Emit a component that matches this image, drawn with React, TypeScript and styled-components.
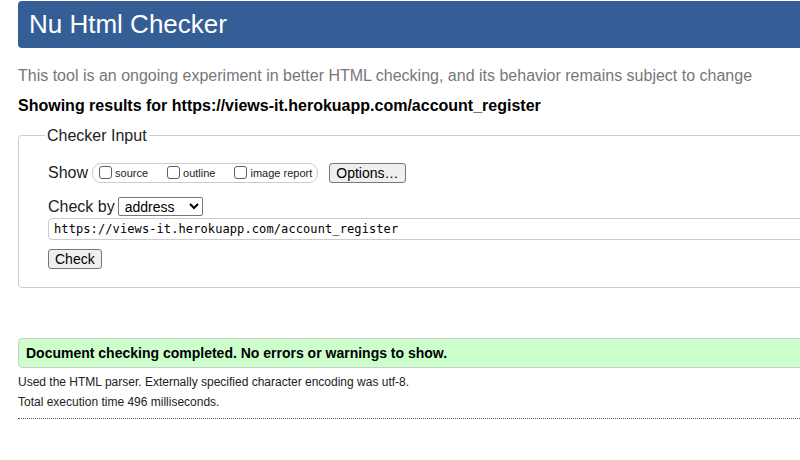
import styled, { createGlobalStyle } from "styled-components";

const GlobalStyle = createGlobalStyle`
    html, body {
        margin: 0;
        padding: 0;
        background: #ffffff;
        overflow: hidden;
    }

    body {
        font-family: "Liberation Sans", Arial, sans-serif;
        color: #000000;
    }
`;

const Page = styled.div`
    width: 900px;
    padding: 1px 0 0 18px;
`;

const Header = styled.h1`
    margin: 0;
    height: 47px;
    padding-left: 11px;

    background-color: #365e96;
    border-radius: 4px;
    color: #ffffff;

    font-size: 26px;
    font-weight: normal;
    line-height: 47px;
`;

const Intro = styled.p`
    margin: 18px 0 0;
    color: #777777;
    font-size: 16px;
    line-height: 19px;
`;

const ResultsFor = styled.p`
    margin: 11px 0 0;
    font-size: 16px;
    font-weight: bold;
    line-height: 19px;
`;

const InputFieldset = styled.fieldset`
    margin: 11px 0 0;
    padding: 17px 0 18px 26px;
    border: 1px solid #cccccc;
    border-radius: 4px;
`;

const Legend = styled.legend`
    padding: 0 2px;
    font-size: 16px;
    line-height: 19px;
    color: #222222;
`;

const FieldRow = styled.div<{ $top?: number }>`
    display: flex;
    align-items: center;
    margin-top: ${p => p.$top ?? 0}px;
    padding-left: 3px;
`;

const RowLabel = styled.span`
    font-size: 16px;
    line-height: 21px;
    color: #222222;
`;

const ShowOptions = styled.div`
    display: flex;
    align-items: center;
    gap: 16px;
    height: 18px;
    margin-left: 4px;
    padding: 0 5px 0 3px;

    border: 1px solid #cccccc;
    border-radius: 9px;
`;

const CheckLabel = styled.label`
    display: flex;
    align-items: center;
    font-size: 11px;
    color: #222222;
`;

const CheckBox = styled.input.attrs({ type: "checkbox" })`
    appearance: none;
    box-sizing: border-box;
    width: 13px;
    height: 13px;
    margin: 0 3px 0 3px;

    background: #ffffff;
    border: 1px solid #5f5f5f;
    border-radius: 3px;
`;

const PlainButton = styled.button<{ $gap?: number }>`
    height: 20px;
    margin-left: ${p => p.$gap ?? 0}px;
    padding: 0 6px;

    background-color: #efefef;
    border: 1px solid #767676;
    border-radius: 3px;
    color: #000000;

    font-family: "Liberation Sans", Arial, sans-serif;
    font-size: 14px;
    line-height: 18px;
`;

const Select = styled.select`
    width: 85px;
    height: 19px;
    margin-left: 3px;
    padding: 0 0 0 2px;

    border: 1px solid #767676;
    border-radius: 2px;
    background: #ffffff;

    font-family: "Liberation Sans", Arial, sans-serif;
    font-size: 14px;
`;

const UrlInput = styled.input`
    box-sizing: border-box;
    width: 840px;
    height: 22px;
    padding: 0 5px;

    border: 1px solid #cccccc;
    border-radius: 4px;

    font-family: "DejaVu Sans Mono", "Liberation Mono", monospace;
    font-size: 12px;
    letter-spacing: 0.1px;
    color: #000000;
`;

const SuccessBox = styled.div`
    margin-top: 50px;
    height: 28px;
    padding-left: 7px;

    background-color: #ccffcc;
    border: 1px solid #cccccc;
    border-radius: 4px;

    font-size: 14px;
    font-weight: bold;
    line-height: 28px;
`;

const Detail = styled.p<{ $top: number }>`
    margin: ${p => p.$top}px 0 0;
    font-size: 12px;
    line-height: 14px;
    color: #222222;
`;

const DottedRule = styled.hr`
    margin: 9px 0 0;
    border: 0;
    border-top: 1px dotted #555555;
    height: 0;
`;

export const App = () => {
    const url = "https://views-it.herokuapp.com/account_register";

    return (
        <Page>
            <GlobalStyle />
            <Header>Nu Html Checker</Header>
            <Intro>
                This tool is an ongoing experiment in better HTML checking, and its behavior remains subject to change
            </Intro>
            <ResultsFor>Showing results for {url}</ResultsFor>
            <InputFieldset>
                <Legend>Checker Input</Legend>
                <FieldRow>
                    <RowLabel>Show</RowLabel>
                    <ShowOptions>
                        <CheckLabel><CheckBox />source</CheckLabel>
                        <CheckLabel><CheckBox />outline</CheckLabel>
                        <CheckLabel><CheckBox />image report</CheckLabel>
                    </ShowOptions>
                    <PlainButton $gap={11}>Options…</PlainButton>
                </FieldRow>
                <FieldRow $top={13}>
                    <RowLabel>Check by</RowLabel>
                    <Select defaultValue="address">
                        <option value="address">address</option>
                        <option value="file">file upload</option>
                        <option value="text">text input</option>
                    </Select>
                </FieldRow>
                <FieldRow $top={1}>
                    <UrlInput defaultValue={url} />
                </FieldRow>
                <FieldRow $top={9}>
                    <PlainButton>Check</PlainButton>
                </FieldRow>
            </InputFieldset>
            <SuccessBox>Document checking completed. No errors or warnings to show.</SuccessBox>
            <Detail $top={7}>Used the HTML parser. Externally specified character encoding was utf-8.</Detail>
            <Detail $top={6}>Total execution time 496 milliseconds.</Detail>
            <DottedRule />
        </Page>
    );
};

export default App;
